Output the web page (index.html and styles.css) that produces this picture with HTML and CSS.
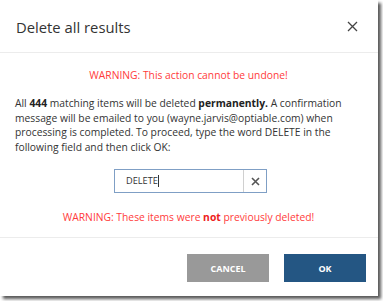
FILE: index.html
```html
<!DOCTYPE html>
<html>
<head>
<meta charset="utf-8">
<link rel="stylesheet" href="styles.css">
</head>
<body>
<div class="dialog">
  <div class="header">
    <span class="title">Delete all results</span>
    <span class="close">
      <svg width="11" height="11" viewBox="0 0 11 11"><path d="M1 1L10 10M10 1L1 10" stroke="#444" stroke-width="1.3" fill="none"/></svg>
    </span>
  </div>
  <div class="content">
    <p class="warn">WARNING: This action cannot be undone!</p>
    <p class="text">All <b>444</b> matching items will be deleted <b>permanently.</b> A confirmation message will be emailed to you (wayne.jarvis@optiable.com) when processing is completed. To proceed, type the word DELETE in the following field and then click OK:</p>
    <div class="field-row">
      <div class="field">
        <span class="value">DELETE<span class="caret"></span></span>
        <span class="clear">
          <svg width="9" height="9" viewBox="0 0 9 9"><path d="M1 1L8 8M8 1L1 8" stroke="#555" stroke-width="1.6" fill="none"/></svg>
        </span>
      </div>
    </div>
    <p class="warn warn2">WARNING: These items were <b>not</b> previously deleted!</p>
  </div>
  <div class="footer">
    <button class="btn cancel">CANCEL</button>
    <button class="btn ok">OK</button>
  </div>
</div>
</body>
</html>
```

FILE: styles.css
```css
html, body {
  margin: 0;
  padding: 0;
  background: #fff;
}
body {
  font-family: "Open Sans", "Liberation Sans", sans-serif;
  color: #333;
  width: 383px;
  height: 301px;
  overflow: hidden;
}
.dialog {
  width: 378px;
  height: 296px;
  background: #fff;
  box-shadow: 3px 3px 3px rgba(0,0,0,0.65);
  display: flex;
  flex-direction: column;
}
.header {
  height: 53px;
  border-bottom: 1px solid #ececec;
  display: flex;
  align-items: center;
  justify-content: space-between;
  padding: 0 20px 0 16px;
  box-sizing: border-box;
  flex: none;
}
.title {
  font-size: 14.8px;
  color: #333;
  margin-top: 1px;
}
.close {
  display: flex;
  margin-top: 1px;
}
.content {
  padding: 14px 16px 0 15px;
  flex: 1;
}
.warn {
  margin: 0;
  text-align: center;
  color: #ff3b3b;
  font-size: 10.3px;
  line-height: 16px;
}
.text {
  margin: 13px 0 0;
  font-size: 10.3px;
  line-height: 14.5px;
  color: #333;
}
.text b { color: #222; }
.field-row {
  display: flex;
  justify-content: center;
  margin-top: 15px;
  padding-left: 4px;
}
.field {
  width: 153px;
  height: 24px;
  border: 1px solid #7f9fc5;
  box-sizing: border-box;
  display: flex;
}
.value {
  flex: 1;
  font-size: 9.2px;
  line-height: 22px;
  padding-left: 11px;
  color: #333;
  display: flex;
  align-items: center;
}
.caret {
  width: 1px;
  height: 12px;
  background: #333;
}
.clear {
  width: 22px;
  border-left: 1px solid #d0d0d0;
  display: flex;
  align-items: center;
  justify-content: center;
}
.warn2 {
  margin-top: 16px;
}
.warn2 b { color: #ee2222; }
.footer {
  height: 59px;
  border-top: 1px solid #ececec;
  display: flex;
  justify-content: flex-end;
  align-items: flex-start;
  gap: 15px;
  padding: 16px 12px 0 0;
  box-sizing: border-box;
  flex: none;
}
.btn {
  width: 82px;
  height: 28px;
  border: none;
  color: #fff;
  font-family: "Open Sans", "Liberation Sans", sans-serif;
  font-size: 9px;
  font-weight: bold;
  padding: 0;
}
.cancel { background: #999; }
.ok { background: #245683; }
```
